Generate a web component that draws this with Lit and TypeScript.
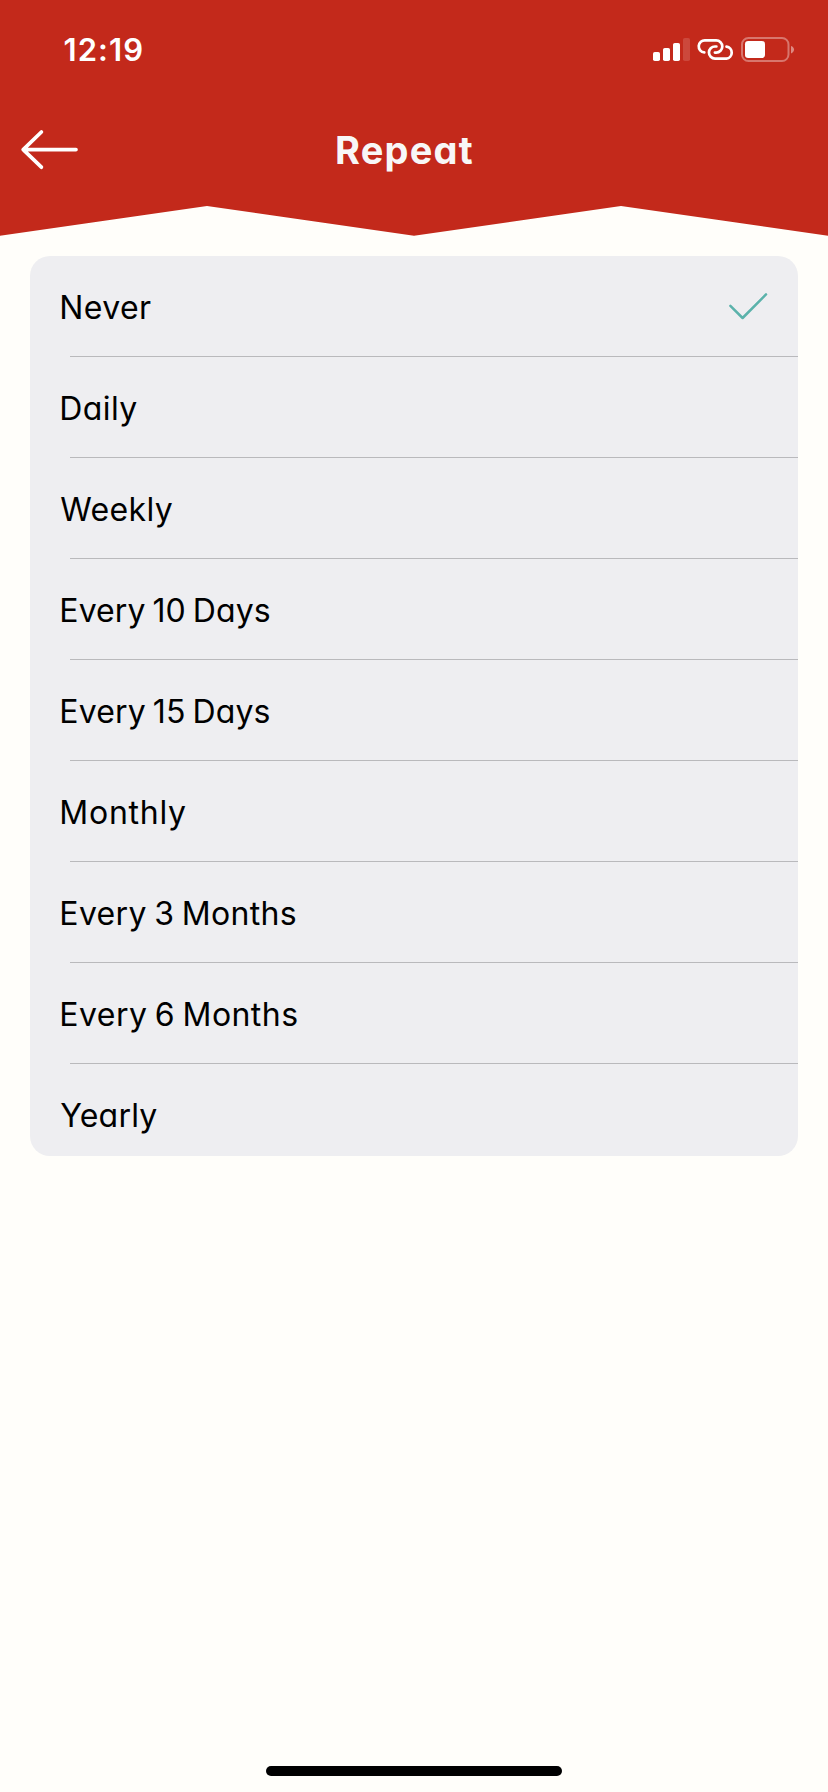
import { LitElement, html, css, nothing } from "lit";
import { customElement, property, state } from "lit/decorators.js";
import { styleMap } from "lit/directives/style-map.js";

interface RepeatOption {
  label: string;
  tracking: number;
  wordGap?: number;
  indent?: number;
}

const OPTIONS: RepeatOption[] = [
  { label: "Never", tracking: 0.4 },
  { label: "Daily", tracking: 0.4 },
  { label: "Weekly", tracking: 0.35, indent: 1 },
  { label: "Every 10 Days", tracking: 0.1, wordGap: -2.2 },
  { label: "Every 15 Days", tracking: 0.15, wordGap: -2.2 },
  { label: "Monthly", tracking: 0.75 },
  { label: "Every 3 Months", tracking: 0.35, wordGap: -2 },
  { label: "Every 6 Months", tracking: 0.45, wordGap: -2 },
  { label: "Yearly", tracking: 0.2, indent: 1 },
];

@customElement("status-bar")
export class StatusBar extends LitElement {
  static styles = css`
    :host {
      display: flex;
      justify-content: space-between;
      height: 88px;
      padding: 0 33px 0 63.5px;
      color: #fff;
    }
    .clock {
      font-size: 31px;
      font-weight: 600;
      line-height: 99px;
      letter-spacing: 1.1px;
    }
    .icons {
      display: flex;
      gap: 7px;
      padding-top: 37px;
    }
    svg {
      display: block;
    }
  `;

  render() {
    return html`
      <span class="clock">12:19</span>
      <div class="icons">
        <svg width="37" height="26" viewBox="0 0 37 26" fill="#fff">
          <rect x="0" y="15" width="7" height="9" rx="1.8" />
          <rect x="10" y="11" width="7" height="13" rx="1.8" />
          <rect x="20" y="6" width="7" height="18" rx="1.8" />
          <rect x="30" y="1" width="7" height="23" rx="1.8" opacity="0.15" />
        </svg>
        <svg width="37" height="26" viewBox="0 0 37 26" fill="none" stroke="#fff" stroke-width="2.7" stroke-linecap="round">
          <path d="M7.3 15.4A6 6 0 0 1 8.2 3.4H19.2A6.1 6.1 0 0 1 19.2 15.6H17.9" />
          <path d="M29.5 9.6A6.05 6.05 0 0 1 29.4 21.6H18A6.05 6.05 0 0 1 18 9.5H19.4" />
        </svg>
        <svg width="54" height="26" viewBox="0 0 54 26">
          <rect x="1" y="1" width="46.5" height="23" rx="6.5" fill="none" stroke="#fff" stroke-width="2" opacity="0.36" />
          <rect x="4" y="4" width="20" height="17" rx="3.2" fill="#fff" />
          <path d="M50 9C52 9.5 53 11 53 12.6S52 15.8 50 16.4Z" fill="#fff" opacity="0.45" />
        </svg>
      </div>
    `;
  }
}

@customElement("repeat-row")
export class RepeatRow extends LitElement {
  @property({ attribute: false }) option!: RepeatOption;
  @property({ type: Boolean }) checked = false;

  static styles = css`
    :host {
      display: flex;
      justify-content: space-between;
      align-items: flex-start;
      height: 100px;
      padding: 0 30px 0 29.3px;
      cursor: pointer;
    }
    .label {
      font-size: 32px;
      line-height: 103px;
      font-feature-settings: "cv11";
      white-space: nowrap;
    }
    .check {
      display: block;
      margin-top: 35px;
    }
  `;

  render() {
    const { label, tracking, wordGap = 0, indent = 0 } = this.option;
    const spacing = {
      letterSpacing: `${tracking}px`,
      wordSpacing: `${wordGap}px`,
      marginLeft: `${indent}px`,
    };
    return html`
      <span class="label" style=${styleMap(spacing)}>${label}</span>
      ${this.checked
        ? html`<svg class="check" width="40" height="30" viewBox="0 0 40 30" fill="none"
            stroke="#5bb2ab" stroke-width="2.5" stroke-linecap="round" stroke-linejoin="round">
            <path d="M2.4 14.8L14.6 27L38 3.4" />
          </svg>`
        : nothing}
    `;
  }
}

@customElement("app-root")
export class AppRoot extends LitElement {
  @state() private selected = "Never";

  static styles = css`
    :host {
      display: flex;
      flex-direction: column;
      height: 1792px;
      background: #fffefa;
      font-family: Inter, "Noto Sans", sans-serif;
      color: #000;
    }
    .header {
      height: 236px;
      background: #c3291b;
      clip-path: polygon(0 0, 100% 0, 100% 235.8px, 75% 206px, 50% 235.8px, 25% 206px, 0 235.8px);
    }
    .nav {
      display: grid;
      grid-template-columns: 60px 1fr 60px;
      align-items: center;
      height: 124px;
      padding: 0 20px;
    }
    .back {
      display: block;
    }
    .title {
      margin: 0 19px 0 0;
      text-align: center;
      font-size: 38px;
      font-weight: 650;
      line-height: 48px;
      letter-spacing: 1.2px;
      font-feature-settings: "cv11";
      color: #f8f7f7;
    }
    .card {
      margin: 20px 30px 0;
      height: 900px;
      border-radius: 20px;
      background: #eeeef1;
      overflow: hidden;
    }
    .divider {
      height: 1px;
      margin-left: 40px;
      background: #b9b9bc;
    }
    .home {
      width: 296px;
      height: 10px;
      margin: auto auto 16px;
      border-radius: 5px;
      background: #000;
    }
  `;

  render() {
    return html`
      <header class="header">
        <status-bar></status-bar>
        <div class="nav">
          <svg class="back" width="60" height="42" viewBox="0 0 60 42" fill="none"
            stroke="#fff" stroke-width="3.7" stroke-linecap="round" stroke-linejoin="round">
            <path d="M21.4 3L3.2 20.6L21.4 38.2M3.2 20.6H56" />
          </svg>
          <h1 class="title">Repeat</h1>
        </div>
      </header>
      <main class="card">
        ${OPTIONS.map(
          (option, i) => html`
            ${i > 0 ? html`<div class="divider"></div>` : nothing}
            <repeat-row
              .option=${option}
              ?checked=${option.label === this.selected}
              @click=${() => (this.selected = option.label)}
            ></repeat-row>
          `,
        )}
      </main>
      <div class="home"></div>
    `;
  }
}
